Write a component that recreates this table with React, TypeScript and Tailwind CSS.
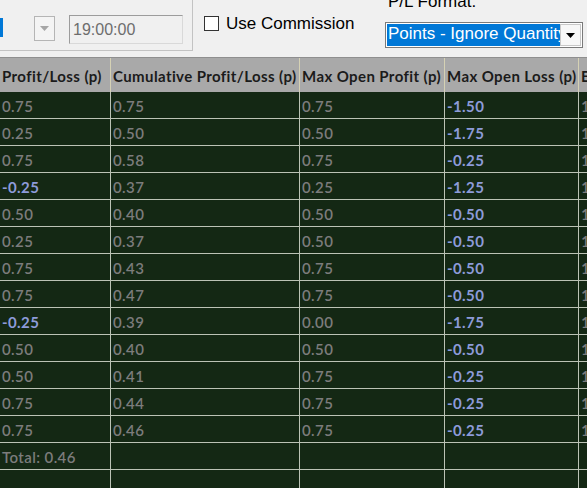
import React from "react";

type Row = [string, string, string, string, string];

const rows: Row[] = [
  ["0.75", "0.75", "0.75", "-1.50", "1"],
  ["0.25", "0.50", "0.50", "-1.75", "1"],
  ["0.75", "0.58", "0.75", "-0.25", "1"],
  ["-0.25", "0.37", "0.25", "-1.25", "1"],
  ["0.50", "0.40", "0.50", "-0.50", "1"],
  ["0.25", "0.37", "0.50", "-0.50", "1"],
  ["0.75", "0.43", "0.75", "-0.50", "1"],
  ["0.75", "0.47", "0.75", "-0.50", "1"],
  ["-0.25", "0.39", "0.00", "-1.75", "1"],
  ["0.50", "0.40", "0.50", "-0.50", "1"],
  ["0.50", "0.41", "0.75", "-0.25", "1"],
  ["0.75", "0.44", "0.75", "-0.25", "1"],
  ["0.75", "0.46", "0.75", "-0.25", "1"],
  ["Total: 0.46", "", "", "", ""],
  ["", "", "", "", ""],
];

const widths = ["w-[111px]", "w-[189px]", "w-[145px]", "w-[134px]", "flex-1"];

function Cell({ text, i }: { text: string; i: number }) {
  const neg = text.startsWith("-");
  return (
    <div
      className={`${widths[i]} shrink-0 h-full flex items-center pl-[2px] pt-[2px] whitespace-nowrap overflow-hidden ${
        i < 4 ? "border-r border-[#bcc3b6]" : ""
      } ${neg ? "text-[#8d9bd9] font-bold" : "text-[#7c7c7c] font-semibold"}`}
    >
      {text}
    </div>
  );
}

export default function App() {
  const headers = [
    "Profit/Loss (p)",
    "Cumulative Profit/Loss (p)",
    "Max Open Profit (p)",
    "Max Open Loss (p)",
    "Entry Efficiency",
  ];
  return (
    <div className="w-[587px] h-[488px] overflow-hidden bg-[#142814] flex flex-col">
      {/* top panel */}
      <div
        className="h-[57px] shrink-0 bg-[#f0f0f0] flex items-start text-[17px] text-black overflow-hidden"
        style={{ fontFamily: '"Liberation Sans", Arial, sans-serif' }}
      >
        <div className="w-[193px] h-[51px] shrink-0 border-r border-b border-[#c3c3c3] flex items-start pt-[15px]">
          <div className="w-[55px] h-[26px] flex items-start">
            <div className="w-[3px] h-[19px] mt-[3px] bg-[#0078d7]" />
            <div className="flex-1 h-full" />
            <div className="w-[21px] h-[25px] mt-[1px] bg-[#f4f4f4] border border-[#b5b5b5] flex items-center justify-center">
              <svg width="9" height="5" viewBox="0 0 9 5">
                <path d="M0 0 H9 L4.5 5 Z" fill="#a6a6a6" />
              </svg>
            </div>
          </div>
          <div className="ml-[14px] w-[114px] h-[29px] border-t border-l border-[#9c9c9c] border-r-[#d9d9d9] border-b-[#d9d9d9] border-r border-b flex items-center pl-[3px] text-[16px] text-[#6d6d6d]">
            19:00:00
          </div>
        </div>
        <div className="ml-[11px] mt-[14px] flex items-center">
          <div className="w-[15px] h-[15px] bg-white border border-[#333333]" />
          <span className="ml-[7px] leading-[19px]">Use Commission</span>
        </div>
        <div className="ml-auto mr-[4px] w-[198px] flex flex-col">
          <div className="-mt-[8px] h-[19px] leading-[19px] pl-[3px] whitespace-nowrap">P/L Format:</div>
          <div className="mt-[11px] h-[26px] border border-[#7a7a7a] bg-white flex items-stretch p-[1px]">
            <div className="flex-1 bg-[#0078d7] text-white leading-[20px] pl-[1px] overflow-hidden whitespace-nowrap">
              Points - Ignore Quantity
            </div>
            <div className="w-[21px] bg-[#f7f7f7] border border-[#c8c8c8] flex items-center justify-center">
              <svg width="9" height="5" viewBox="0 0 9 5">
                <path d="M0 0 H9 L4.5 5 Z" fill="#000000" />
              </svg>
            </div>
          </div>
        </div>
      </div>
      <div className="h-[1px] shrink-0 bg-[#8f8f8f]" />
      {/* table */}
      <div style={{ fontFamily: 'Lato, "Noto Sans", sans-serif' }} className="text-[15px] tracking-[0.4px]">
        <div className="h-[34px] bg-[#a9a9a9] flex text-[#1b1b1b] font-bold">
          {headers.map((h, i) => (
            <div
              key={i}
              className={`${widths[i]} shrink-0 h-full flex items-center pl-[2px] pt-[2px] whitespace-nowrap overflow-hidden ${
                i < 4 ? "border-r border-[#d5d1b4]" : ""
              }`}
            >
              {h}
            </div>
          ))}
        </div>
        {rows.map((r, ri) => (
          <div key={ri} className="h-[27px] flex border-b border-[#bcc3b6]">
            {r.map((c, ci) => (
              <Cell key={ci} text={c} i={ci} />
            ))}
          </div>
        ))}
      </div>
    </div>
  );
}
